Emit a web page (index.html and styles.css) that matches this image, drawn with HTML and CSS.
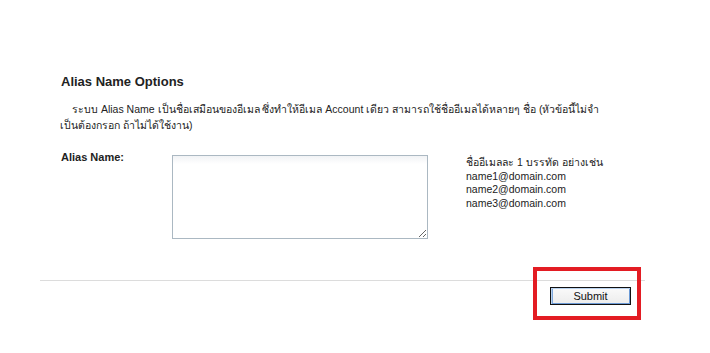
FILE: index.html
```html
<!DOCTYPE html>
<html lang="th">
<head>
    <meta charset="UTF-8">
    <title>Alias Name Options</title>
    <link rel="stylesheet" href="styles.css">
</head>
<body>
    <div class="panel">
        <h3 class="title">Alias Name Options</h3>
        <p class="intro">ระบบ Alias Name เป็นชื่อเสมือนของอีเมล ซึ่งทำให้อีเมล Account เดียว สามารถใช้ชื่ออีเมลได้หลายๆ ชื่อ (หัวข้อนี้ไม่จำ<wbr>เป็นต้องกรอก ถ้าไม่ได้ใช้งาน)</p>

        <div class="field">
            <label class="field-label" for="aliasName">Alias Name:</label>
            <textarea id="aliasName" class="alias-box"></textarea>
            <div class="field-help">
                ชื่ออีเมลละ 1 บรรทัด อย่างเช่น<br>
                name1@domain.com<br>
                name2@domain.com<br>
                name3@domain.com
            </div>
        </div>
    </div>

    <div class="footer">
        <div class="submit-wrap">
            <button type="button" class="submit-btn">Submit</button>
            <span class="highlight"></span>
        </div>
    </div>
</body>
</html>
```
FILE: styles.css
```css
body {
    margin: 0;
    font-family: 'Liberation Sans', Tahoma, Arial, sans-serif;
    font-size: 10.5px;
    color: #222;
    background-color: #fff;
}

.panel {
    padding: 74px 60px 0 60px;
}

.title {
    margin: 0 0 12px 1px;
    font-size: 13px;
    font-weight: bold;
    color: #222;
}

.intro {
    margin: 0;
    width: 556px;
    line-height: 16px;
    text-indent: 12px;
}

.field {
    display: flex;
    align-items: flex-start;
    margin-top: 20px;
}

.field-label {
    width: 112px;
    margin-top: -2px;
    font-size: 11px;
    font-weight: bold;
    padding-left: 1px;
    box-sizing: border-box;
}

.alias-box {
    width: 256px;
    height: 84px;
    margin: 2px 0 0 0;
    padding: 2px;
    box-sizing: border-box;
    border: 1px solid #abb8c2;
    background: linear-gradient(#f1f3f5, #fff 8px);
    font-family: 'Liberation Sans', Tahoma, Arial, sans-serif;
    font-size: 12px;
    resize: both;
}

.field-help {
    margin: 3px 0 0 38px;
    line-height: 13.5px;
}

.footer {
    margin: 41px 65px 0 40px;
    border-top: 1px solid #dcdcdc;
    display: flex;
    justify-content: flex-end;
    padding: 6px 14px 40px 0;
}

.submit-wrap {
    position: relative;
}

.submit-btn {
    width: 81px;
    height: 18px;
    padding: 0;
    border: 1px solid #111;
    background: linear-gradient(#fafafa, #ececec);
    box-shadow: inset 1px 1px 0 #b9d2ef, inset -1px -1px 0 #6b9ad6, inset 2px 0 0 #7fa8dc;
    font-family: 'Liberation Sans', Tahoma, Arial, sans-serif;
    font-size: 11px;
    color: #111;
    display: block;
}

.highlight {
    position: absolute;
    left: -17px;
    right: -10px;
    top: -20px;
    bottom: -15px;
    border: 4px solid #e31c23;
    pointer-events: none;
}
```
